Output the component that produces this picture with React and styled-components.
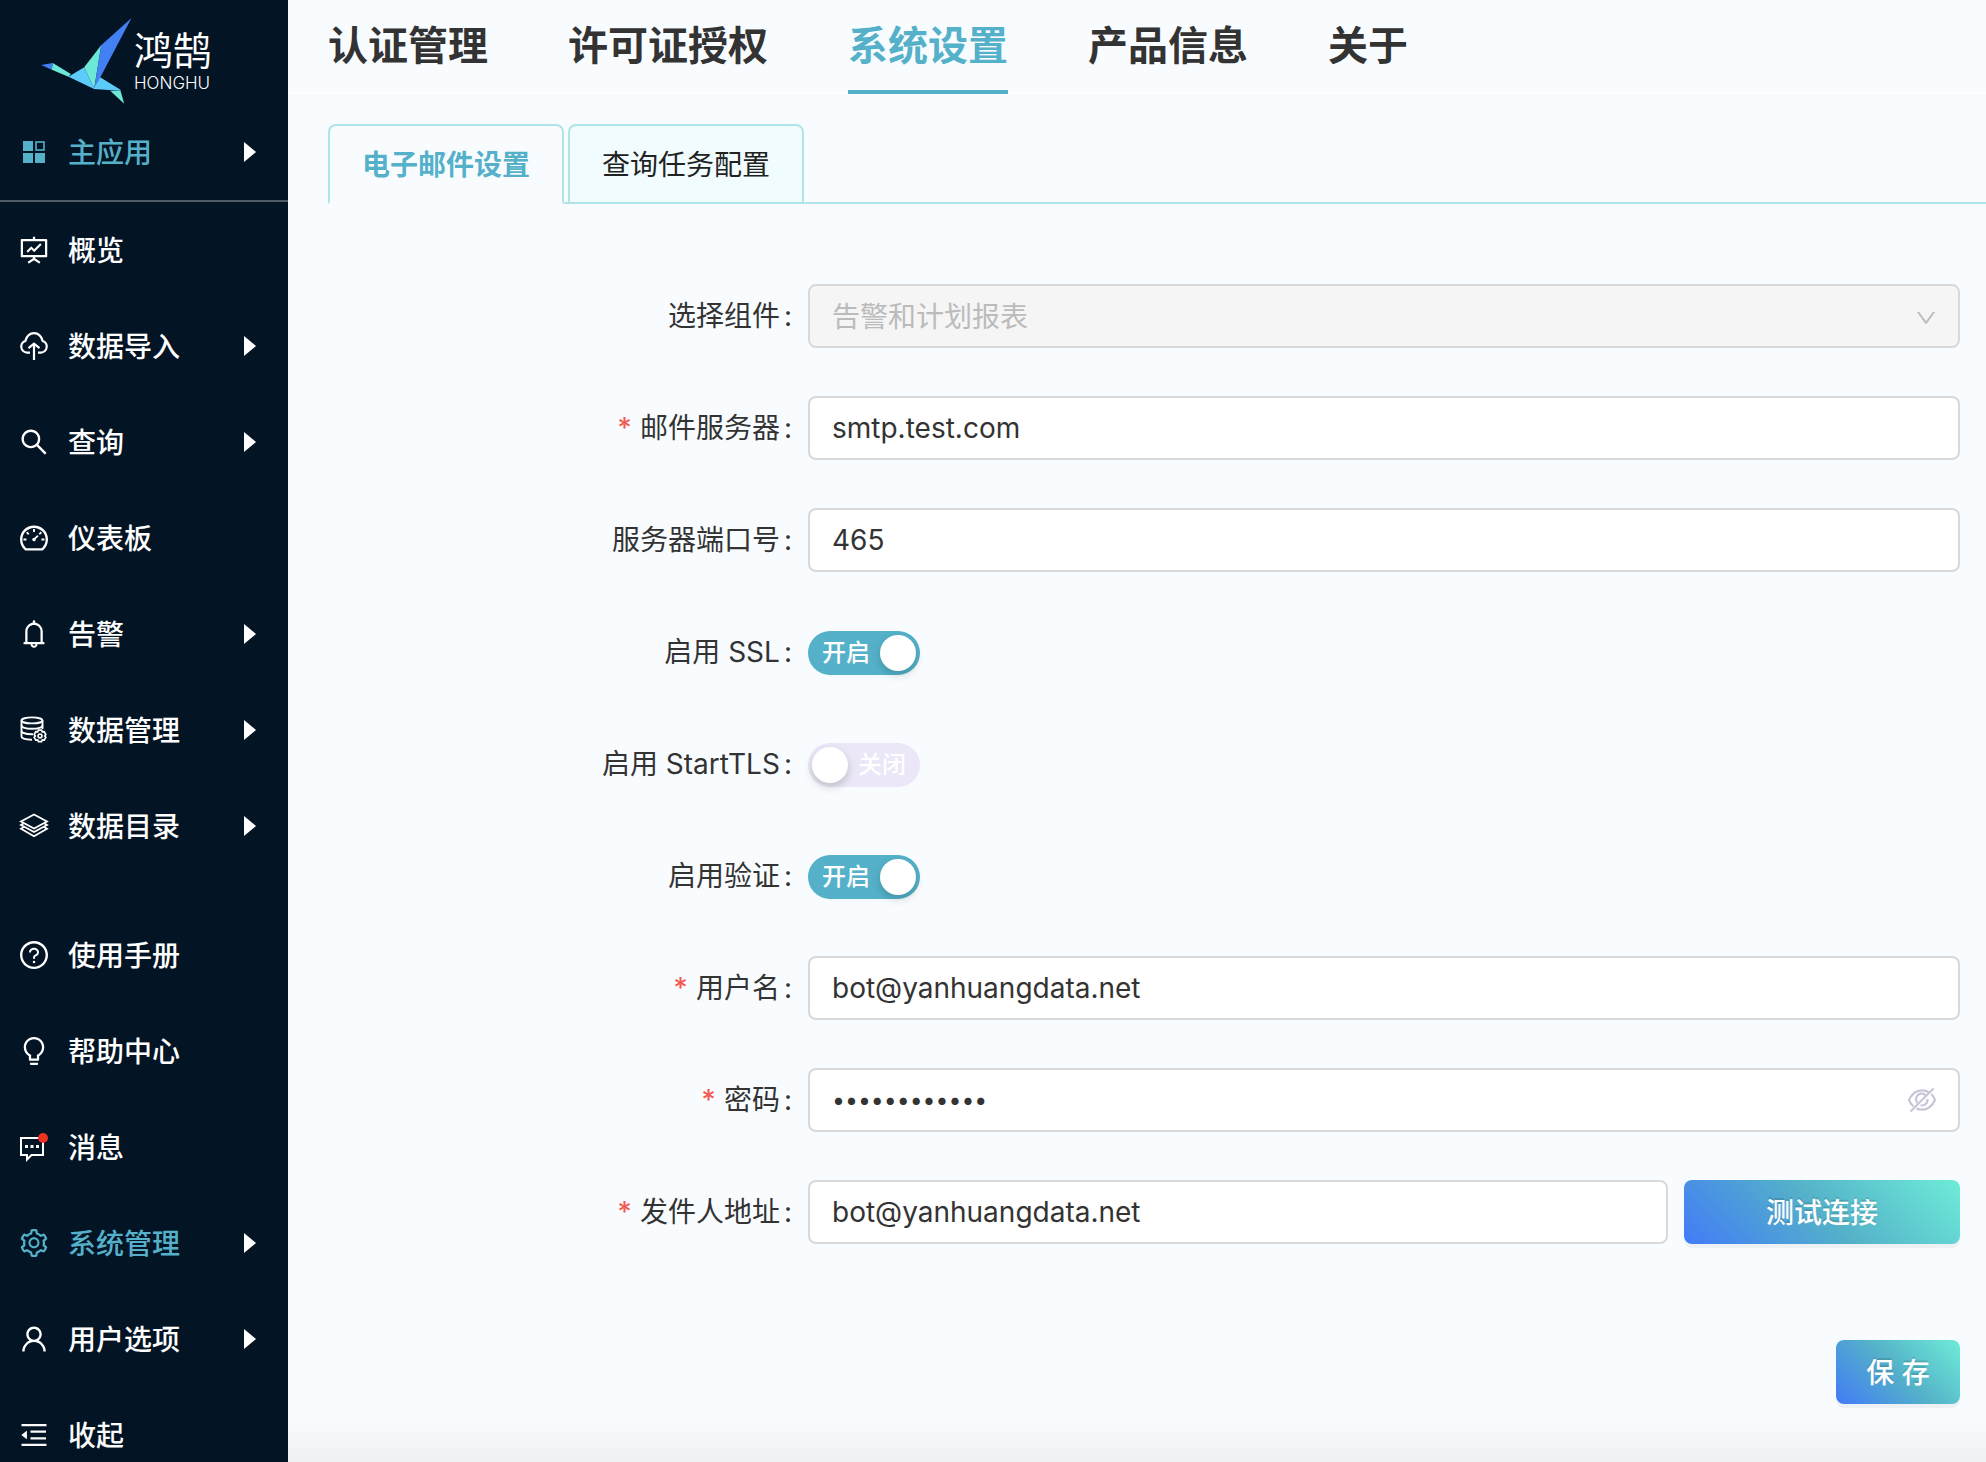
import React, { useState } from "react";
import styled, { createGlobalStyle } from "styled-components";
import {
  AiOutlineBell,
  AiOutlineBulb,
  AiOutlineDashboard,
  AiOutlineDown,
  AiOutlineFundProjectionScreen,
  AiOutlineMenuFold,
  AiOutlineQuestionCircle,
  AiOutlineSearch,
  AiOutlineSetting,
  AiOutlineUser,
} from "react-icons/ai";

function AppsIcon() {
  return (
    <svg viewBox="0 0 32 32" fill="currentColor">
      <rect x="5" y="5" width="10" height="10" />
      <rect x="5" y="17" width="10" height="10" />
      <rect x="17" y="17" width="10" height="10" />
      <rect x="18" y="6" width="8" height="8" fill="none" stroke="currentColor" strokeWidth="1.6" />
    </svg>
  );
}

function CloudUploadIcon() {
  return (
    <svg viewBox="0 0 32 32" fill="none" stroke="currentColor" strokeWidth="2.2">
      <path d="M12 22.6H9a6 6 0 0 1-1.6-11.7C8.800 6 12 3.200 16 3.200s7.200 2.800 8.600 7.700A6 6 0 0 1 23 22.600h-3" />
      <path d="M16 30V14M10.500 18.200l5.500-4.600 5.500 4.600" />
    </svg>
  );
}

function DataGearIcon() {
  return (
    <svg viewBox="0 0 32 32" fill="none" stroke="currentColor" strokeWidth="1.9">
      <ellipse cx="14" cy="6.400" rx="10.500" ry="3" />
      <path d="M3.500 6.400v16.200c0 1.800 4 3 10.500 3.200M24.500 6.400V15" />
      <path d="M3.500 11.600c0 1.700 4.500 3.200 10.500 3.200s10.500-1.500 10.500-3.200M3.500 17c0 1.700 4.500 3.200 10.500 3.200h1" />
      <g strokeWidth="1.700">
        <path d="M20.400 16.200h3.200l.7 1.700 1.900-.2 1.600 2.700-1.100 1.500 1.100 1.500-1.600 2.700-1.900-.2-.7 1.700h-3.200l-.7-1.700-1.900.2-1.600-2.700 1.100-1.500-1.100-1.500 1.600-2.700 1.900.2z" />
        <circle cx="22" cy="21.900" r="1.900" />
      </g>
    </svg>
  );
}

function LayersIcon() {
  return (
    <svg viewBox="0 0 32 32" fill="none" stroke="currentColor" strokeWidth="1.8">
      <path d="M16 4.500L29 11.500 16 18.500 3 11.500z" />
      <path d="M5.500 13.500L3 15l13 7 13-7-2.500-1.500M5.500 17.200L3 18.700l13 7.500 13-7.500-2.500-1.500" />
    </svg>
  );
}

function MessageIcon() {
  return (
    <svg viewBox="0 0 32 32" fill="none" stroke="currentColor" strokeWidth="2">
      <path d="M3 7h22v17H13.500L9 28.500V24H3z" />
      <path d="M7 15.500h3M12.500 15.500h3M18 15.500h3" strokeWidth="3" />
    </svg>
  );
}

function EyeOffIcon() {
  return (
    <svg viewBox="0 0 32 32" fill="none" stroke="currentColor" strokeWidth="2.2">
      <path d="M23 8.200C20.800 7 18.500 6.300 16 6.300 9.500 6.300 5.500 10.500 3 16c1 2.600 2.500 4.800 4.400 6.500" />
      <path d="M25.200 10c1.600 1.500 2.900 3.500 3.800 6-2.500 5.500-6.500 9.700-13 9.700-2 0-3.900-.4-5.600-1.200" />
      <path d="M20 11.800A5.500 5.500 0 0 0 11.200 18.800M21.400 15a5.500 5.500 0 0 1-6.800 6.300" />
      <path d="M27.500 4.500L4.500 27.500" />
    </svg>
  );
}

function BirdLogo() {
  return (
    <BirdSvg viewBox="33 25 272 258">
      <path fill="#4380f3" d="M33 166l35-6-3 20z" />
      <path fill="#6ce9d6" d="M68 160l54 33-7 8-50-21z" />
      <path fill="#5ccbf9" d="M115 201l47-28 30 65z" />
      <path fill="#6ce9d6" d="M162 173l51-66-21 131z" />
      <path fill="#4380f3" d="M213 107l91-82-112 213z" />
      <path fill="#5ccbf9" d="M190 238l20-35 61 37v3z" />
      <path fill="#6ce9d6" d="M240 243h31l11 39z" />
    </BirdSvg>
  );
}

const mainItems = [
  { text: "概览", icon: <AiOutlineFundProjectionScreen /> },
  { text: "数据导入", icon: <CloudUploadIcon />, more: true },
  { text: "查询", icon: <AiOutlineSearch />, more: true },
  { text: "仪表板", icon: <AiOutlineDashboard /> },
  { text: "告警", icon: <AiOutlineBell />, more: true },
  { text: "数据管理", icon: <DataGearIcon />, more: true },
  { text: "数据目录", icon: <LayersIcon />, more: true },
];

const extraItems = [
  { text: "使用手册", icon: <AiOutlineQuestionCircle /> },
  { text: "帮助中心", icon: <AiOutlineBulb /> },
  { text: "消息", icon: <MessageIcon />, dot: true },
  { text: "系统管理", icon: <AiOutlineSetting />, more: true, active: true },
  { text: "用户选项", icon: <AiOutlineUser />, more: true },
  { text: "收起", icon: <AiOutlineMenuFold /> },
];

const pages = ["认证管理", "许可证授权", "系统设置", "产品信息", "关于"];

function MenuItem({ item }) {
  return (
    <MenuLink href="#" $active={item.active}>
      <MenuIcon>
        {item.icon}
        {item.dot && <Dot />}
      </MenuIcon>
      <MenuText>{item.text}</MenuText>
      {item.more && (
        <Caret viewBox="0 0 12 20">
          <path d="M0 0l12 10L0 20z" fill="#fff" />
        </Caret>
      )}
    </MenuLink>
  );
}

function Field({ id, label, required, children }) {
  return (
    <Row>
      <Label htmlFor={id}>
        {required && <Star>*</Star>}
        <span>{label}</span>
        <Colon>:</Colon>
      </Label>
      <Control>{children}</Control>
    </Row>
  );
}

function Switch({ id, defaultChecked }) {
  const [on, setOn] = useState(defaultChecked);
  return (
    <Track $on={on}>
      <SwitchInput
        id={id}
        type="checkbox"
        role="switch"
        checked={on}
        onChange={(e) => setOn(e.target.checked)}
      />
      <SwitchText>{on ? "开启" : "关闭"}</SwitchText>
      <Knob />
    </Track>
  );
}

function App() {
  return (
    <Shell>
      <GlobalStyle />
      <Sidebar>
        <Brand>
          <BirdLogo />
          <BrandText>
            <BrandName>鸿鹄</BrandName>
            <BrandLatin>HONGHU</BrandLatin>
          </BrandText>
        </Brand>
        <MenuItem item={{ text: "主应用", icon: <AppsIcon />, more: true, active: true }} />
        <MenuGroup $line>
          {mainItems.map((item) => (
            <MenuItem key={item.text} item={item} />
          ))}
        </MenuGroup>
        <MenuGroup>
          {extraItems.map((item) => (
            <MenuItem key={item.text} item={item} />
          ))}
        </MenuGroup>
      </Sidebar>
      <Main>
        <PageNav>
          {pages.map((page) => (
            <PageLink key={page} href="#" $active={page === "系统设置"}>
              {page}
            </PageLink>
          ))}
        </PageNav>
        <Tabs role="tablist">
          <Tab type="button" role="tab" aria-selected="true" $active>
            电子邮件设置
          </Tab>
          <Tab type="button" role="tab" aria-selected="false">
            查询任务配置
          </Tab>
        </Tabs>
        <Form onSubmit={(e) => e.preventDefault()}>
          <Field id="component" label="选择组件">
            <Select id="component" disabled>
              <option>告警和计划报表</option>
            </Select>
            <SelectArrow>
              <AiOutlineDown />
            </SelectArrow>
          </Field>
          <Field id="server" label="邮件服务器" required>
            <Input id="server" defaultValue="smtp.test.com" />
          </Field>
          <Field id="port" label="服务器端口号">
            <Input id="port" defaultValue="465" />
          </Field>
          <Field id="ssl" label="启用 SSL">
            <Switch id="ssl" defaultChecked={true} />
          </Field>
          <Field id="starttls" label="启用 StartTLS">
            <Switch id="starttls" defaultChecked={false} />
          </Field>
          <Field id="auth" label="启用验证">
            <Switch id="auth" defaultChecked={true} />
          </Field>
          <Field id="user" label="用户名" required>
            <Input id="user" defaultValue="bot@yanhuangdata.net" />
          </Field>
          <Field id="password" label="密码" required>
            <PasswordInput id="password" type="password" defaultValue="abcdefghijkl" />
            <EyeButton type="button" aria-label="显示密码">
              <EyeOffIcon />
            </EyeButton>
          </Field>
          <Field id="sender" label="发件人地址" required>
            <Input id="sender" defaultValue="bot@yanhuangdata.net" />
            <TestButton type="button">测试连接</TestButton>
          </Field>
          <Actions>
            <SaveButton type="submit">保 存</SaveButton>
          </Actions>
        </Form>
      </Main>
    </Shell>
  );
}
export default App;

const GlobalStyle = createGlobalStyle`
  * {
    box-sizing: border-box;
  }

  body {
    margin: 0;
    color: #333;
    background: #f9fcff;
    font-family: Inter, "Noto Sans CJK SC", sans-serif;
    font-size: 28px;
    line-height: 44px;
  }

  a {
    color: inherit;
    text-decoration: none;
  }

  button,
  input,
  select {
    font: inherit;
    color: inherit;
    margin: 0;
  }
`;

const Shell = styled.div`
  display: flex;
  height: 100vh;
  overflow: hidden;

  &:after {
    content: "";
    position: fixed;
    left: 0;
    right: 0;
    bottom: 0;
    height: 44px;
    background: linear-gradient(to top, rgba(0, 0, 0, 0.045), rgba(0, 0, 0, 0));
    pointer-events: none;
  }
`;

const Sidebar = styled.aside`
  flex: 0 0 288px;
  overflow: hidden;
  background: #031425;
  color: #fff;
`;

const Brand = styled.div`
  display: flex;
  gap: 2px;
  padding: 18px 0 0 41px;
`;
const BirdSvg = styled.svg`
  width: 91px;
  height: 86px;
`;
const BrandText = styled.div`
  display: flex;
  flex-direction: column;
  padding-top: 13px;
`;
const BrandName = styled.span`
  font-size: 39px;
  line-height: 40px;
`;
const BrandLatin = styled.span`
  font-size: 17px;
  font-weight: 300;
  line-height: 24px;
`;

const MenuGroup = styled.nav`
  border-top: ${(props) => (props.$line ? "2px solid #505c67" : "none")};

  & + & {
    margin-top: 33px;
  }
`;
const MenuLink = styled.a`
  display: flex;
  align-items: center;
  gap: 18px;
  height: 96px;
  padding: 0 32px 0 18px;
  color: ${(props) => (props.$active ? "#54b1c9" : "#fff")};
`;
const MenuIcon = styled.span`
  position: relative;
  display: flex;

  svg {
    width: 32px;
    height: 32px;
  }
`;
const MenuText = styled.span`
  flex: 1;
  padding-top: 2px;
  font-weight: 500;
`;
const Dot = styled.i`
  position: absolute;
  top: 2px;
  right: 2px;
  width: 10px;
  height: 10px;
  border-radius: 50%;
  background: #ec3324;
`;
const Caret = styled.svg`
  width: 12px;
  height: 20px;
`;

const Main = styled.main`
  flex: 1;
  min-width: 0;
  overflow: hidden;
`;

const PageNav = styled.nav`
  display: flex;
  gap: 80px;
  height: 94px;
  padding-left: 40px;
  border-bottom: 2px solid #fdfeff;
`;
const PageLink = styled.a`
  height: 94px;
  padding-top: 18px;
  border-bottom: 4px solid ${(props) => (props.$active ? "#54b1c9" : "transparent")};
  color: ${(props) => (props.$active ? "#54b1c9" : "#333")};
  font-size: 40px;
  font-weight: 600;
  line-height: 56px;
`;

const Tabs = styled.div`
  display: flex;
  gap: 4px;
  margin: 30px 0 0 40px;
  box-shadow: inset 0 -2px 0 #b0e4e8;
`;
const Tab = styled.button`
  height: 80px;
  padding: 2px 32px 0;
  border: 2px solid #b0e4e8;
  border-bottom-color: ${(props) => (props.$active ? "#f9fcff" : "#b0e4e8")};
  border-radius: 8px 8px 0 0;
  background: ${(props) => (props.$active ? "#f9fcff" : "#f0fcfd")};
  color: ${(props) => (props.$active ? "#54b1c9" : "#222")};
  font-weight: ${(props) => (props.$active ? 600 : 400)};
  cursor: pointer;
`;

const Form = styled.form`
  display: flex;
  flex-direction: column;
  gap: 48px;
  padding: 80px 26px 0 40px;
`;
const Row = styled.div`
  display: grid;
  grid-template-columns: 5fr 12fr;
  align-items: center;
  min-height: 64px;
`;
const Label = styled.label`
  display: flex;
  justify-content: flex-end;
  padding-right: 16px;
`;
const Star = styled.span`
  margin-right: 8px;
  color: #f35b53;
  font-weight: 500;
`;
const Colon = styled.span`
  margin-left: 4px;
`;
const Control = styled.div`
  position: relative;
  display: flex;
  gap: 16px;
`;
const Input = styled.input`
  flex: 1;
  min-width: 0;
  height: 64px;
  padding: 0 22px;
  border: 2px solid #d9d9d9;
  border-radius: 8px;
  background: #fff;
  outline: none;
`;
const PasswordInput = styled(Input)`
  padding-right: 64px;
  font-size: 23px;
`;
const Select = styled.select`
  flex: 1;
  min-width: 0;
  height: 64px;
  padding: 2px 22px 0;
  border: 2px solid #d9d9d9;
  border-radius: 8px;
  background: #f5f5f5;
  color: #bbb;
  appearance: none;
  opacity: 1;
`;
const SelectArrow = styled.span`
  position: absolute;
  top: 22px;
  right: 22px;
  display: flex;
  color: #bbb;
  font-size: 24px;
  pointer-events: none;
`;
const EyeButton = styled.button`
  position: absolute;
  top: 16px;
  right: 22px;
  width: 32px;
  height: 32px;
  padding: 0;
  border: 0;
  background: none;
  color: #c9c5d9;
  cursor: pointer;

  svg {
    display: block;
  }
`;

const Track = styled.span`
  position: relative;
  display: flex;
  flex-direction: ${(props) => (props.$on ? "row" : "row-reverse")};
  align-items: center;
  justify-content: space-between;
  width: 112px;
  height: 44px;
  margin-top: 2px;
  padding: ${(props) => (props.$on ? "0 4px 0 14px" : "0 14px 0 4px")};
  border-radius: 22px;
  background: ${(props) => (props.$on ? "#54b1c9" : "#ebe7f8")};
  color: #fff;
`;
const SwitchInput = styled.input`
  position: absolute;
  inset: 0;
  width: 100%;
  height: 100%;
  opacity: 0;
  cursor: pointer;
`;
const SwitchText = styled.span`
  font-size: 24px;
  font-weight: 500;
`;
const Knob = styled.span`
  width: 36px;
  height: 36px;
  border-radius: 50%;
  background: #fff;
  box-shadow: 0 4px 8px rgba(0, 35, 11, 0.2);
`;

const Button = styled.button`
  height: 64px;
  padding: 2px 0 0;
  border: 0;
  border-radius: 8px;
  background: linear-gradient(45deg, #427bf7 0%, #54b1c9 50%, #6eecd8 100%);
  box-shadow: 0 4px 0 rgba(0, 0, 0, 0.045);
  color: #fff;
  font-weight: 500;
  text-shadow: 0 -2px 0 rgba(0, 0, 0, 0.12);
  cursor: pointer;
`;
const TestButton = styled(Button)`
  width: 276px;
`;
const SaveButton = styled(Button)`
  width: 124px;
`;
const Actions = styled.div`
  display: flex;
  justify-content: flex-end;
  padding-top: 48px;
`;
